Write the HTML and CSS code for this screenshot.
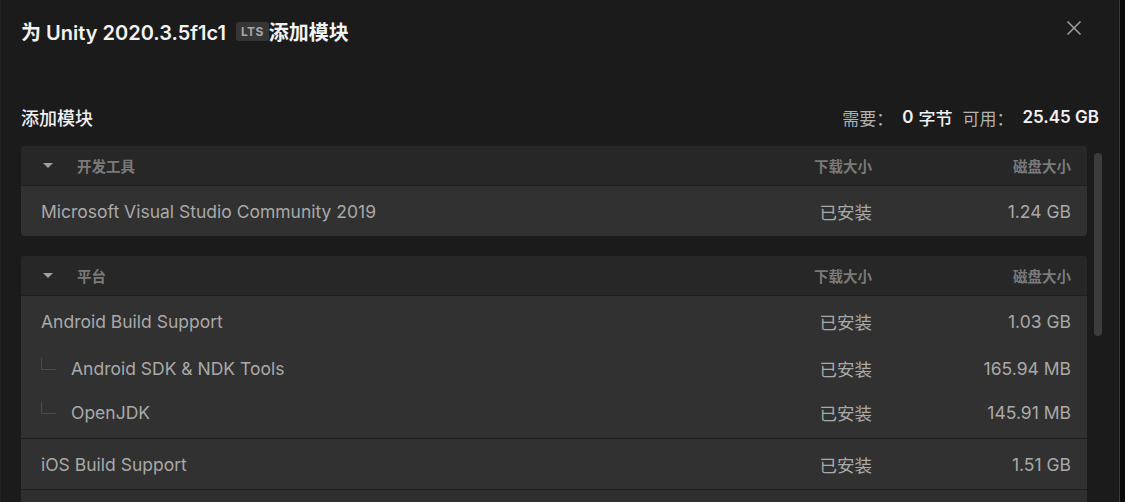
FILE: index.html
```html
<!DOCTYPE html>
<html lang="zh">
<head>
<meta charset="utf-8">
<title>添加模块</title>
<link rel="stylesheet" href="styles.css">
</head>
<body>
<div class="dialog">
  <header class="titlebar">
    <h1 class="title">为 Unity 2020.3.5f1c1<span class="badge">LTS</span>添加模块</h1>
    <button class="close" aria-label="关闭">
      <svg width="16" height="16" viewBox="0 0 16 16"><path d="M1.5 1.5 L14.5 14.5 M14.5 1.5 L1.5 14.5" stroke="#9a9a9a" stroke-width="1.6" fill="none"/></svg>
    </button>
  </header>

  <div class="subheader">
    <h2 class="subtitle">添加模块</h2>
    <div class="space">
      <span class="muted">需要：</span><strong class="num">0</strong><span class="unit">字节</span>
      <span class="muted gap">可用：</span><strong class="num">25.45 GB</strong>
    </div>
  </div>

  <div class="content">
    <div class="list">
      <section class="group">
        <div class="ghead">
          <span class="tri"></span>
          <span class="gname">开发工具</span>
          <span class="col dl">下载大小</span>
          <span class="col disk">磁盘大小</span>
        </div>
        <div class="row">
          <span class="name">Microsoft Visual Studio Community 2019</span>
          <span class="col dl">已安装</span>
          <span class="col disk">1.24 GB</span>
        </div>
      </section>

      <section class="group">
        <div class="ghead">
          <span class="tri"></span>
          <span class="gname">平台</span>
          <span class="col dl">下载大小</span>
          <span class="col disk">磁盘大小</span>
        </div>
        <div class="block">
          <div class="row">
            <span class="name">Android Build Support</span>
            <span class="col dl">已安装</span>
            <span class="col disk">1.03 GB</span>
          </div>
          <div class="row sub">
            <span class="branch"></span>
            <span class="name">Android SDK &amp; NDK Tools</span>
            <span class="col dl">已安装</span>
            <span class="col disk">165.94 MB</span>
          </div>
          <div class="row sub">
            <span class="branch"></span>
            <span class="name">OpenJDK</span>
            <span class="col dl">已安装</span>
            <span class="col disk">145.91 MB</span>
          </div>
        </div>
        <div class="block">
          <div class="row">
            <span class="name">iOS Build Support</span>
            <span class="col dl">已安装</span>
            <span class="col disk">1.51 GB</span>
          </div>
        </div>
        <div class="block">
          <div class="row next"></div>
        </div>
      </section>
    </div>
    <div class="scrollbar"><div class="thumb"></div></div>
  </div>
</div>
</body>
</html>
```

FILE: styles.css
```css
* { box-sizing: border-box; }
html, body { margin: 0; padding: 0; }
body {
  background: #0a0a0a;
  width: 1125px;
  height: 502px;
  overflow: hidden;
  font-family: Inter, "Noto Sans CJK SC", sans-serif;
}
.dialog {
  width: 1120px;
  height: 502px;
  background: #1b1b1b;
  border-left: 1px solid #232323;
  border-right: 1px solid #3a3a3a;
  overflow: hidden;
}
.titlebar {
  display: flex;
  align-items: center;
  height: 62px;
  padding: 0 37px 0 20px;
}
.title {
  margin: 0;
  font-size: 20px;
  font-weight: 600;
  color: #f2f2f2;
  display: flex;
  align-items: center;
}
.badge {
  font-size: 12px;
  font-weight: 700;
  color: #a6a6a6;
  background: #363636;
  border-radius: 3px;
  height: 19px;
  line-height: 19px;
  padding: 0 5px;
  margin: 0 0 0 10px;
  letter-spacing: 0.4px;
}
.close {
  margin-left: auto;
  background: none;
  border: 0;
  padding: 0;
  width: 16px;
  height: 16px;
  display: flex;
  margin-top: -6px;
}
.subheader {
  display: flex;
  justify-content: space-between;
  align-items: center;
  height: 34px;
  margin: 38px 0 12px;
  padding: 0 20px 0 20px;
}
.subtitle {
  margin: 0;
  font-size: 18px;
  font-weight: 500;
  color: #f0f0f0;
}
.space {
  font-size: 17px;
  color: #f2f2f2;
  display: flex;
  align-items: center;
}
.num { font-weight: 600; margin-left: 9px; }
.unit { margin-left: 5px; font-weight: 500; }
.muted { color: #b2b2b2; }
.gap { margin-left: 10px; }

.content {
  display: flex;
  padding-left: 20px;
  align-items: flex-start;
}
.list { width: 1066px; }
.scrollbar {
  margin: 7px 0 0 7px;
  width: 8px;
}
.thumb {
  width: 8px;
  height: 183px;
  border-radius: 4px;
  background: #3c3c3c;
}
.group {
  background: #313131;
  border-radius: 4px;
  overflow: hidden;
  margin-bottom: 20px;
}
.ghead {
  display: flex;
  align-items: center;
  height: 40px;
  padding: 0 16px 0 22px;
  background: #272727;
  border-bottom: 1px solid #1f1f1f;
  font-size: 14.5px;
  font-weight: 600;
  color: #7a7a7a;
}
.tri {
  width: 0;
  height: 0;
  border-left: 5px solid transparent;
  border-right: 5px solid transparent;
  border-top: 5px solid #a0a0a0;
  margin-right: 24px;
}
.gname { flex: 1; }
.col { text-align: right; }
.dl { width: 200px; }
.disk { width: 199px; }
.row {
  display: flex;
  align-items: center;
  height: 50px;
  padding: 0 16px 0 20px;
  font-size: 17.5px;
  color: #a9a9a9;
}
.row .name { flex: 1; }
.block { border-top: 1px solid #1f1f1f; }
.ghead + .block { border-top: 0; }
.block .row.sub { height: 44px; }
.block .row.sub:last-child { height: 48px; padding-bottom: 4px; }
.row.next { background: #2f2f2f; }
.branch {
  width: 15px;
  height: 12px;
  border-left: 1px solid #4c4c4c;
  border-bottom: 1px solid #4c4c4c;
  margin: -8px 15px 0 0;
}
```
